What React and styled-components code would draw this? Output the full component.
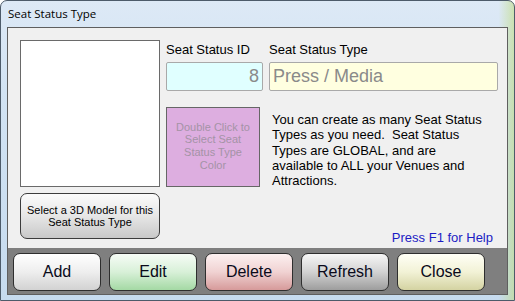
import React from "react";
import styled, { createGlobalStyle } from "styled-components";

const Global = createGlobalStyle`
  html, body { margin: 0; padding: 0; background: #ffffff; }
  * { box-sizing: border-box; }
`;

const Window = styled.div`
  width: 515px;
  height: 301px;
  border: 1px solid #4d5b6a;
  border-radius: 7px 7px 0 0;
  padding: 0 6px 5px 6px;
  display: flex;
  flex-direction: column;
  background:
    linear-gradient(90deg, rgba(255,255,255,0) 0%, rgba(255,255,255,0) 97%, rgba(190,220,120,0.55) 100%),
    linear-gradient(180deg, #dde9f6 0%, #d2e3f3 30%, #c6dbef 100%);
  font-family: "Liberation Sans", Arial, sans-serif;
  overflow: hidden;
`;

const TitleBar = styled.div`
  height: 26px;
  display: flex;
  align-items: center;
  padding-left: 1px;
  padding-bottom: 1px;
  font-family: "Open Sans", "Liberation Sans", sans-serif;
  font-size: 11.5px;
  color: #000;
`;

const Client = styled.div`
  height: 268px;
  border: 1px solid #5f5f5f;
  background: #f0f0f0;
  display: flex;
  flex-direction: column;
`;

const Main = styled.div`
  height: 220px;
  display: flex;
  gap: 6px;
  padding: 12px 9px 0 12px;
`;

const LeftCol = styled.div`
  width: 140px;
  display: flex;
  flex-direction: column;
  gap: 6px;
`;

const Picture = styled.div`
  height: 147px;
  background: #ffffff;
  border: 1px solid #6a6a6a;
`;

const ModelButton = styled.button`
  height: 46px;
  border: 1px solid #3c3c3c;
  border-radius: 7px;
  background: linear-gradient(180deg, #fbfbfb 0%, #e6e6e6 50%, #c9c9c9 100%);
  font-family: "Liberation Sans", Arial, sans-serif;
  font-size: 11px;
  line-height: 12.5px;
  color: #000;
  padding: 0 4px;
  text-align: center;
`;

const RightCol = styled.div`
  flex: 1;
  display: flex;
  flex-direction: column;
`;

const FieldRow = styled.div`
  display: flex;
  gap: 6px;
`;

const Field = styled.div`
  width: ${(p) => p.$w}px;
  display: flex;
  flex-direction: column;
`;

const Label = styled.div`
  padding-top: 2px;
  line-height: 15px;
  font-size: 13px;
  color: #000;
  margin-bottom: 5px;
  white-space: nowrap;
`;

const Input = styled.div`
  height: 29px;
  border: 1px solid #a9a9a9;
  border-radius: 2px;
  background: ${(p) => p.$bg};
  color: #8a8a8a;
  font-size: 18px;
  line-height: 27px;
  padding: 0 3px;
  text-align: ${(p) => (p.$right ? "right" : "left")};
  white-space: nowrap;
`;

const InfoRow = styled.div`
  display: flex;
  gap: 12px;
  margin-top: 16px;
`;

const ColorBox = styled.div`
  width: 94px;
  height: 80px;
  border: 1px solid #666666;
  background: #ddaee0;
  color: #a493a6;
  font-size: 11px;
  line-height: 12.7px;
  display: flex;
  align-items: center;
  justify-content: center;
  text-align: center;
  padding: 0 4px 2px;
`;

const Description = styled.div`
  padding-top: 5px;
  font-size: 13px;
  line-height: 15.3px;
  color: #000;
  white-space: pre;
`;

const Help = styled.div`
  margin-top: auto;
  margin-right: 5px;
  padding-bottom: 3px;
  text-align: right;
  font-size: 13px;
  line-height: 15px;
  color: #1c1cc4;
`;

const Toolbar = styled.div`
  height: 46px;
  background: #7f7f7f;
  display: flex;
  gap: 8px;
  padding: 5px 0 0 5px;
`;

const palettes = {
  gray: ["#ffffff", "#eeeeee", "#d2d2d2"],
  green: ["#f6fcf6", "#d8f0d8", "#a4d9a4"],
  red: ["#fcf0f0", "#f0d2d2", "#d69a9a"],
  dark: ["#f7f7f7", "#d2d2d2", "#9d9d9d"],
  yellow: ["#fffff6", "#f2f2d6", "#d4d3a2"],
};

const ToolButton = styled.button`
  width: 88px;
  height: 38px;
  border: 1px solid #2e2e2e;
  border-radius: 7px;
  background: linear-gradient(
    180deg,
    ${(p) => palettes[p.$tone][0]} 0%,
    ${(p) => palettes[p.$tone][1]} 50%,
    ${(p) => palettes[p.$tone][2]} 100%
  );
  font-family: "Liberation Sans", Arial, sans-serif;
  font-size: 16px;
  color: #0a0a1a;
  padding: 0;
`;

export default function App() {
  return (
    <>
      <Global />
      <Window>
        <TitleBar>Seat Status Type</TitleBar>
        <Client>
          <Main>
            <LeftCol>
              <Picture />
              <ModelButton>
                Select a 3D Model for this
                <br />
                Seat Status Type
              </ModelButton>
            </LeftCol>
            <RightCol>
              <FieldRow>
                <Field $w={97}>
                  <Label>Seat Status ID</Label>
                  <Input $bg="#e0ffff" $right>
                    8
                  </Input>
                </Field>
                <Field $w={229}>
                  <Label>Seat Status Type</Label>
                  <Input $bg="#ffffe0">Press / Media</Input>
                </Field>
              </FieldRow>
              <InfoRow>
                <ColorBox>Double Click to Select Seat Status Type Color</ColorBox>
                <Description>
                  {"You can create as many Seat Status\nTypes as you need.  Seat Status\nTypes are GLOBAL, and are\navailable to ALL your Venues and\nAttractions."}
                </Description>
              </InfoRow>
              <Help>Press F1 for Help</Help>
            </RightCol>
          </Main>
          <Toolbar>
            <ToolButton $tone="gray">Add</ToolButton>
            <ToolButton $tone="green">Edit</ToolButton>
            <ToolButton $tone="red">Delete</ToolButton>
            <ToolButton $tone="dark">Refresh</ToolButton>
            <ToolButton $tone="yellow">Close</ToolButton>
          </Toolbar>
        </Client>
      </Window>
    </>
  );
}
